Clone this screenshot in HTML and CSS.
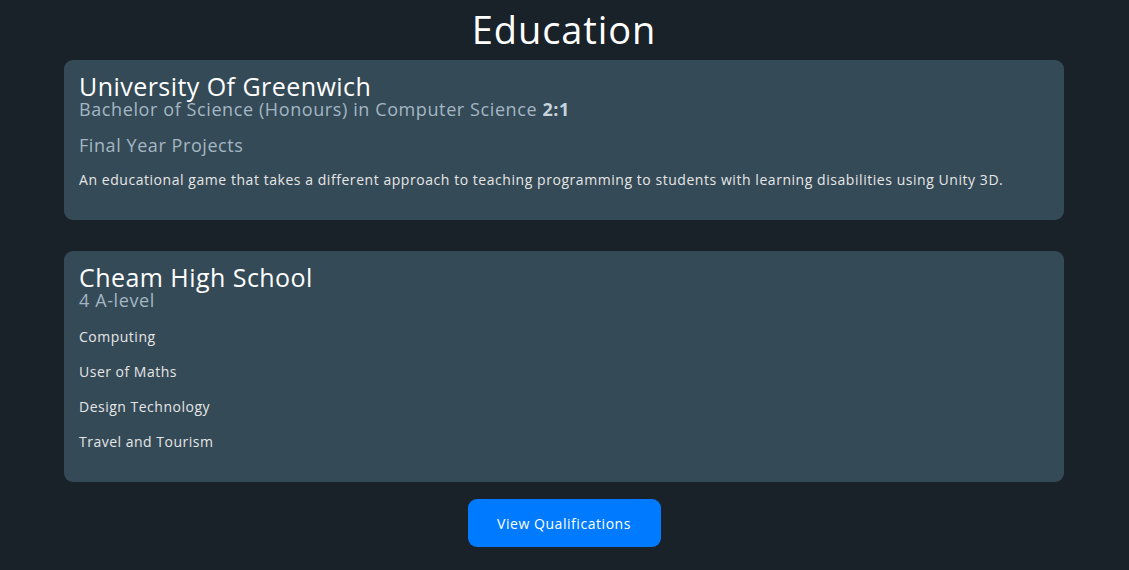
FILE: index.html
```html
<!DOCTYPE html>
<html lang="en">
<head>
<meta charset="utf-8">
<title>Education</title>
<link rel="stylesheet" href="styles.css">
</head>
<body>
<section class="education">
  <h1 class="section-title">Education</h1>
  <article class="card">
    <h2 class="card-title">University Of Greenwich</h2>
    <p class="card-sub">Bachelor of Science (Honours) in Computer Science <strong>2:1</strong></p>
    <h3 class="card-head">Final Year Projects</h3>
    <p class="card-text">An educational game that takes a different approach to teaching programming to students with learning disabilities using Unity 3D.</p>
  </article>
  <article class="card card-school">
    <h2 class="card-title">Cheam High School</h2>
    <p class="card-sub">4 A-level</p>
    <ul class="subjects">
      <li>Computing</li>
      <li>User of Maths</li>
      <li>Design Technology</li>
      <li>Travel and Tourism</li>
    </ul>
  </article>
  <div class="actions">
    <a class="btn" href="#">View Qualifications</a>
  </div>
</section>
</body>
</html>
```
FILE: styles.css
```css
* { box-sizing: border-box; }
html, body { margin: 0; padding: 0; }
body {
  background: #1a2229;
  font-family: "Open Sans", "DejaVu Sans", sans-serif;
  color: #ffffff;
}
.education {
  width: 1000px;
  margin-left: calc(50% - 500.5px);
  padding-top: 6px;
  display: flex;
  flex-direction: column;
}
.section-title {
  margin: 0 0 8px;
  text-align: center;
  font-weight: 400;
  font-size: 38px;
  line-height: 46px;
  letter-spacing: 0.9px;
}
.card {
  background: #344a57;
  border-radius: 9px;
  padding: 12px 15px 30px;
  margin-bottom: 31px;
}
.card-school { margin-bottom: 17px; }
.card-title {
  margin: 0;
  font-weight: 400;
  font-size: 25px;
  line-height: 29px;
  letter-spacing: 0.45px;
}
.card-sub {
  margin: 0;
  font-size: 18px;
  line-height: 16px;
  color: #a4b6c3;
  letter-spacing: 0.6px;
}
.card-sub strong { font-weight: 700; color: #c6d3dc; }
.card-head {
  margin: 16px 0 0;
  font-weight: 400;
  font-size: 18px;
  line-height: 24px;
  color: #a4b6c3;
  letter-spacing: 0.57px;
}
.card-text {
  margin: 13px 0 0;
  font-size: 14px;
  line-height: 20px;
  color: #e6e6e6;
  letter-spacing: 0.55px;
}
.subjects {
  list-style: none;
  margin: 19px 0 0;
  padding: 0;
  display: flex;
  flex-direction: column;
  gap: 15px;
}
.subjects li {
  font-size: 14px;
  line-height: 20px;
  color: #e6e6e6;
  letter-spacing: 0.5px;
}
.actions { display: flex; justify-content: center; }
.btn {
  display: inline-flex;
  align-items: center;
  justify-content: center;
  width: 193px;
  height: 48px;
  background: #007bff;
  border-radius: 9px;
  color: #ffffff;
  font-size: 14px;
  text-decoration: none;
  letter-spacing: 0.55px;
}
```
